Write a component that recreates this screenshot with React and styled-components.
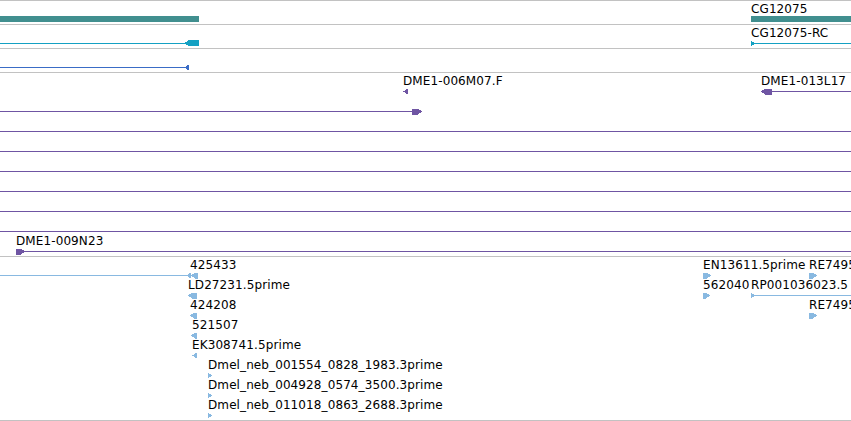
import styled, { createGlobalStyle } from "styled-components";

const GlobalStyle = createGlobalStyle`
  html, body {
    margin: 0;
    padding: 0;
    background: #ffffff;
  }
  body {
    font-family: "DejaVu Sans", "Liberation Sans", sans-serif;
  }
`;

const WIDTH = 851;

const Panel = styled.div`
  width: ${WIDTH}px;
  display: flex;
  flex-direction: column;
  border-bottom: 1px solid #c2c2c2;
  background: #fff;
  overflow: hidden;
`;

const Track = styled.div`
  position: relative;
  box-sizing: border-box;
  height: ${(p) => p.$height}px;
  border-top: 1px solid #c2c2c2;
  overflow: hidden;
`;

const Glyphs = styled.svg`
  display: block;
  width: ${WIDTH}px;
  height: ${(p) => p.$height}px;
`;

// label placed on the track canvas by its baseline (page coords)
const Label = styled.span`
  position: absolute;
  left: ${(p) => p.$x}px;
  top: ${(p) => p.$top}px;
  font-family: "DejaVu Sans", "Liberation Sans", sans-serif;
  font-size: 12px;
  line-height: 14px;
  letter-spacing: 0.1px;
  color: #000;
  white-space: nowrap;
`;

// arrow helpers, c = pixel row of the feature's centre line
const leftTri = (x, c, w = 5) => `${x},${c + 0.5} ${x + w},${c - 2.5} ${x + w},${c + 3.5}`;
const rightTri = (x, c, w = 4) => `${x},${c - 2.5} ${x + w},${c + 0.5} ${x},${c + 3.5}`;
const leftArrow = (x1, x2, c) =>
  `${x1},${c + 0.5} ${x1 + 4},${c - 2.5} ${x2},${c - 2.5} ${x2},${c + 3.5} ${x1 + 4},${c + 3.5}`;
const rightArrow = (x1, x2, c) =>
  `${x1},${c - 2.5} ${x2 - 4},${c - 2.5} ${x2},${c + 0.5} ${x2 - 4},${c + 3.5} ${x1},${c + 3.5}`;

const line = (x1, x2, y) => ({ kind: "line", x1, x2, y });
const bar = (x1, x2, y1, y2) => ({ kind: "bar", x1, x2, y1, y2 });
const poly = (points) => ({ kind: "poly", points });

const bacRows = [131, 151, 171, 191, 211, 231];

const tracks = [
  {
    name: "genes",
    top: 0,
    height: 24,
    color: "#418f8f",
    shapes: [bar(0, 199, 16, 22), bar(751, WIDTH, 16, 22)],
    labels: [{ x: 751, base: 13, text: "CG12075" }],
  },
  {
    name: "transcripts",
    top: 24,
    height: 24,
    color: "#14a1c3",
    shapes: [
      line(0, 186, 43),
      poly(`184,43.5 189,40 199,40 199,46 189,46`),
      line(753, WIDTH, 43),
      poly(rightTri(751, 43)),
    ],
    labels: [{ x: 751, base: 37, text: "CG12075-RC" }],
  },
  {
    name: "cds",
    top: 48,
    height: 24,
    color: "#3a6cc6",
    shapes: [line(0, 186, 67), poly(leftTri(184, 67))],
    labels: [],
  },
  {
    name: "bac",
    top: 72,
    height: 184,
    color: "#6f55a3",
    shapes: [
      poly(leftTri(403, 91)),
      poly(leftArrow(761, 772, 91)),
      line(772, WIDTH, 91),
      line(0, 414, 111),
      poly(rightArrow(412, 422, 111)),
      ...bacRows.map((y) => line(0, WIDTH, y)),
      poly(rightArrow(16, 25, 251)),
      line(24, WIDTH, 251),
    ],
    labels: [
      { x: 403, base: 85, text: "DME1-006M07.F" },
      { x: 761, base: 85, text: "DME1-013L17" },
      { x: 16, base: 245, text: "DME1-009N23" },
    ],
  },
  {
    name: "est",
    top: 256,
    height: 164,
    color: "#89b9e1",
    shapes: [
      line(0, 188, 275),
      poly(leftTri(186, 275)),
      poly(leftArrow(191, 198, 275)),
      poly(leftArrow(188, 197, 295)),
      poly(leftArrow(190, 197, 315)),
      poly(leftArrow(191, 197, 335)),
      poly(leftTri(192, 355)),
      poly(rightTri(208, 375)),
      poly(rightTri(208, 395)),
      poly(rightTri(208, 415)),
      poly(rightArrow(703, 711, 275)),
      poly(rightArrow(809, 817, 275)),
      poly(rightArrow(703, 710, 295)),
      line(753, WIDTH, 295),
      poly(rightTri(751, 295)),
      poly(rightArrow(809, 817, 315)),
    ],
    labels: [
      { x: 190, base: 269, text: "425433" },
      { x: 188, base: 289, text: "LD27231.5prime" },
      { x: 190, base: 309, text: "424208" },
      { x: 192, base: 329, text: "521507" },
      { x: 192, base: 349, text: "EK308741.5prime" },
      { x: 208, base: 369, text: "Dmel_neb_001554_0828_1983.3prime" },
      { x: 208, base: 389, text: "Dmel_neb_004928_0574_3500.3prime" },
      { x: 208, base: 409, text: "Dmel_neb_011018_0863_2688.3prime" },
      { x: 703, base: 269, text: "EN13611.5prime" },
      { x: 809, base: 269, text: "RE7495" },
      { x: 703, base: 289, text: "562040" },
      { x: 751, base: 289, text: "RP001036023.5" },
      { x: 809, base: 309, text: "RE7495" },
    ],
  },
];

const Shape = ({ shape, color }) => {
  if (shape.kind === "line") {
    return (
      <rect x={shape.x1} y={shape.y} width={shape.x2 - shape.x1} height={1} fill={color} />
    );
  }
  if (shape.kind === "bar") {
    return (
      <rect
        x={shape.x1}
        y={shape.y1}
        width={shape.x2 - shape.x1}
        height={shape.y2 - shape.y1}
        fill={color}
      />
    );
  }
  return <polygon points={shape.points} fill={color} />;
};

const TrackView = ({ track }) => {
  const offset = track.top + 1;
  return (
    <Track $height={track.height}>
      <Glyphs $height={track.height - 1} shapeRendering="crispEdges">
        <g transform={`translate(0, ${-offset})`}>
          {track.shapes.map((s, i) => (
            <Shape key={i} shape={s} color={track.color} />
          ))}
        </g>
      </Glyphs>
      {track.labels.map((l) => (
        <Label key={l.text + l.base} $x={l.x} $top={l.base - 11 - offset}>
          {l.text}
        </Label>
      ))}
    </Track>
  );
};

const App = () => {
  return (
    <>
      <GlobalStyle />
      <Panel>
        {tracks.map((t) => (
          <TrackView key={t.name} track={t} />
        ))}
      </Panel>
    </>
  );
};

export default App;
